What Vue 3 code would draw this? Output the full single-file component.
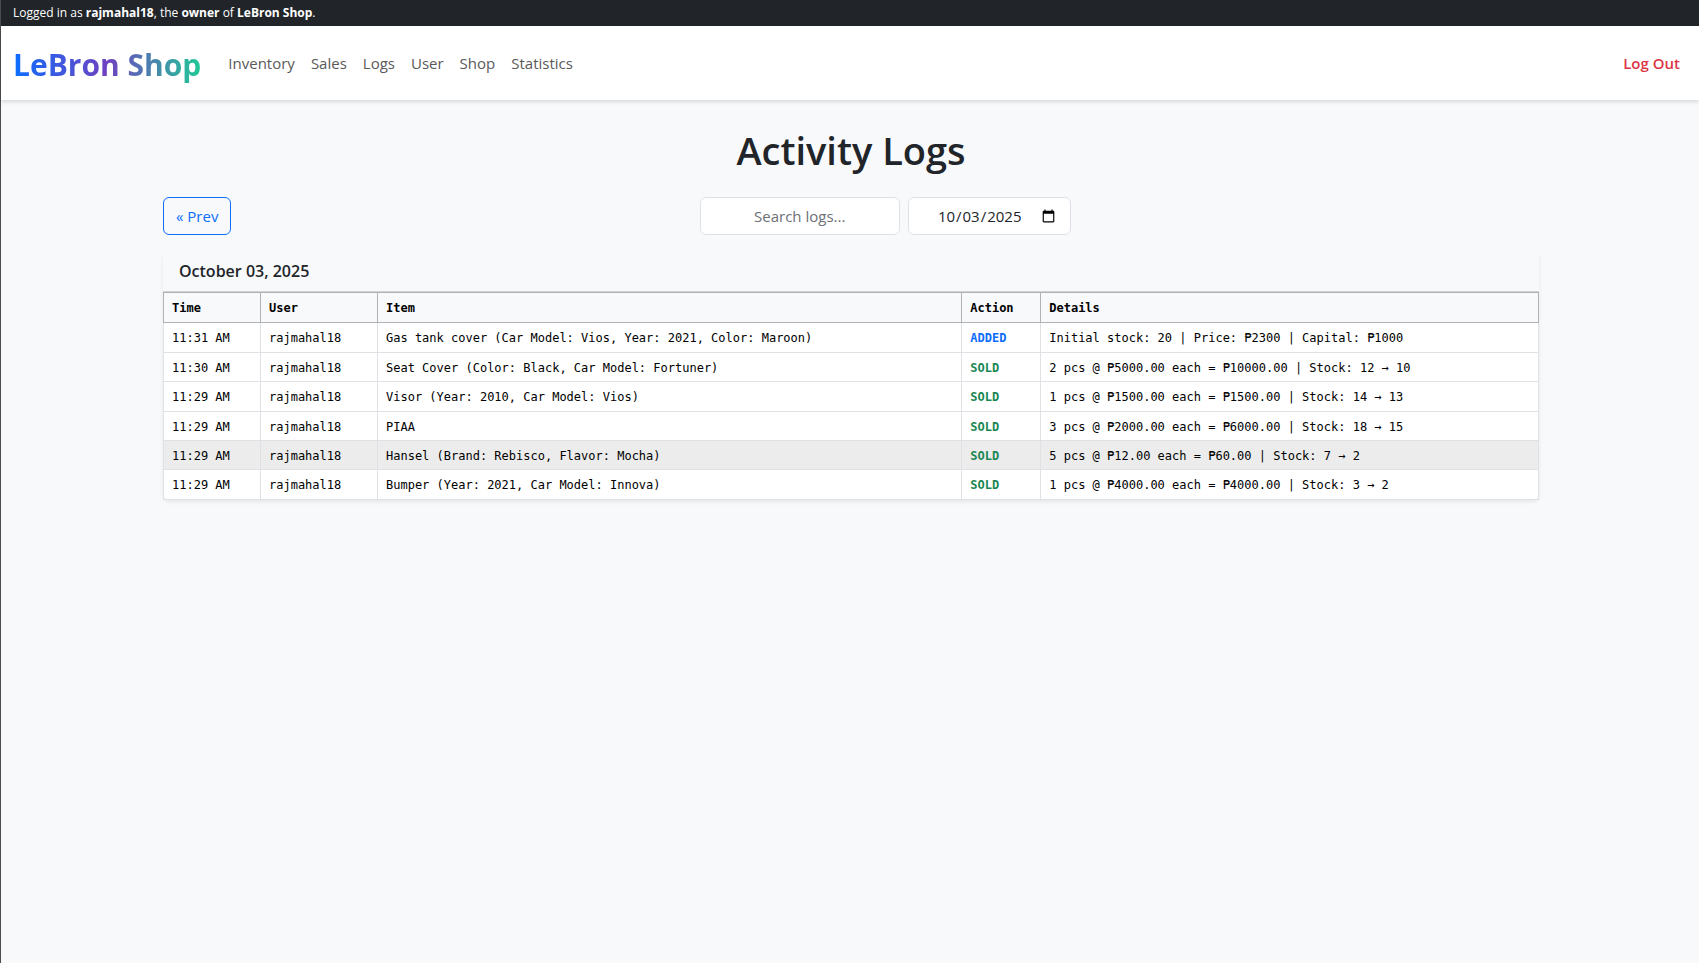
<script setup>
import { ref, computed } from 'vue'

const links = ['Inventory', 'Sales', 'Logs', 'User', 'Shop', 'Statistics']
const search = ref('')
const date = ref('2025-10-03')

const logs = [
  { time: '11:31 AM', user: 'rajmahal18', item: 'Gas tank cover (Car Model: Vios, Year: 2021, Color: Maroon)', action: 'ADDED', details: 'Initial stock: 20 | Price: ₱2300 | Capital: ₱1000' },
  { time: '11:30 AM', user: 'rajmahal18', item: 'Seat Cover (Color: Black, Car Model: Fortuner)', action: 'SOLD', details: '2 pcs @ ₱5000.00 each = ₱10000.00 | Stock: 12 → 10' },
  { time: '11:29 AM', user: 'rajmahal18', item: 'Visor (Year: 2010, Car Model: Vios)', action: 'SOLD', details: '1 pcs @ ₱1500.00 each = ₱1500.00 | Stock: 14 → 13' },
  { time: '11:29 AM', user: 'rajmahal18', item: 'PIAA', action: 'SOLD', details: '3 pcs @ ₱2000.00 each = ₱6000.00 | Stock: 18 → 15' },
  { time: '11:29 AM', user: 'rajmahal18', item: 'Hansel (Brand: Rebisco, Flavor: Mocha)', action: 'SOLD', details: '5 pcs @ ₱12.00 each = ₱60.00 | Stock: 7 → 2', active: true },
  { time: '11:29 AM', user: 'rajmahal18', item: 'Bumper (Year: 2021, Car Model: Innova)', action: 'SOLD', details: '1 pcs @ ₱4000.00 each = ₱4000.00 | Stock: 3 → 2' },
]

const visibleLogs = computed(() => {
  const term = search.value.trim().toLowerCase()
  return logs.filter((log) => `${log.user} ${log.item} ${log.action} ${log.details}`.toLowerCase().includes(term))
})
</script>

<template>
  <div class="page">
    <div class="status">
      Logged in as <strong>rajmahal18</strong>, the <strong>owner</strong> of <strong>LeBron Shop</strong>.
    </div>
    <header class="navbar">
      <a class="brand" href="#">LeBron Shop</a>
      <nav class="links" aria-label="Main">
        <a v-for="link in links" :key="link" href="#">{{ link }}</a>
      </nav>
      <a class="logout" href="#">Log Out</a>
    </header>

    <main class="container">
      <h1>Activity Logs</h1>
      <div class="toolbar">
        <button class="prev" type="button">« Prev</button>
        <form class="filters" @submit.prevent>
          <input v-model="search" class="field search" type="text" placeholder="Search logs..." aria-label="Search logs" />
          <input v-model="date" class="field date" type="date" aria-label="Log date" />
        </form>
        <span></span>
      </div>

      <section class="card">
        <h2>October 03, 2025</h2>
        <table>
          <colgroup>
            <col class="col-time" />
            <col class="col-user" />
            <col />
            <col class="col-action" />
            <col class="col-details" />
          </colgroup>
          <thead>
            <tr>
              <th>Time</th>
              <th>User</th>
              <th>Item</th>
              <th>Action</th>
              <th>Details</th>
            </tr>
          </thead>
          <tbody>
            <tr v-for="(log, i) in visibleLogs" :key="i" :class="{ active: log.active }">
              <td>{{ log.time }}</td>
              <td>{{ log.user }}</td>
              <td>{{ log.item }}</td>
              <td><span class="action" :class="log.action.toLowerCase()">{{ log.action }}</span></td>
              <td>{{ log.details }}</td>
            </tr>
          </tbody>
        </table>
      </section>
    </main>
  </div>
</template>

<style>
body {
  margin: 0;
  background: #f8f9fb;
}
</style>

<style scoped>
* {
  box-sizing: border-box;
}
.page {
  min-height: 100vh;
  border-left: 1px solid #4b4c52;
  background: #f8f9fb;
  color: #212529;
  font: 15px/24px "Open Sans", "Noto Sans", sans-serif;
}
.status {
  padding: 3px 12px;
  background: #212529;
  color: #fff;
  font-size: 12px;
  line-height: 20px;
}
.navbar {
  display: flex;
  align-items: center;
  height: 74px;
  padding: 0 19px 0 12px;
  background: #fff;
  box-shadow: 0 2px 4px rgba(0, 0, 0, 0.13);
}
.brand {
  margin-right: 27px;
  padding-top: 4px;
  background: linear-gradient(90deg, #0d6efd, #6f42c1 50%, #20c997);
  background-clip: text;
  color: transparent;
  font-size: 30px;
  font-weight: 700;
  line-height: 48px;
  text-decoration: none;
}
.links {
  display: flex;
  gap: 16px;
}
.links a {
  color: #595959;
  text-decoration: none;
}
.logout {
  margin-left: auto;
  color: #dc3545;
  font-weight: 600;
  text-decoration: none;
}
.container {
  max-width: 1400px;
  margin: 0 auto;
  padding: 26px 11px 26px 13px;
}
h1 {
  margin: 0 0 23px;
  font-size: 38px;
  font-weight: 600;
  line-height: 48px;
  text-align: center;
}
.toolbar {
  display: flex;
  justify-content: space-between;
  margin-bottom: 16px;
}
.prev,
.field {
  height: 38px;
  border-radius: 6px;
  font: inherit;
}
.prev {
  padding: 0 12px;
  border: 1px solid #0d6efd;
  background: transparent;
  color: #0d6efd;
}
.filters {
  display: flex;
  gap: 8px;
}
.field {
  padding: 6px 12px;
  border: 1px solid #dee2e6;
  background: #fff;
  color: #212529;
  text-align: center;
}
.search {
  width: 200px;
}
.search::placeholder {
  color: #6c7075;
  opacity: 1;
}
.date {
  width: 163px;
}
.card {
  border-radius: 6px;
  background: #fff;
  box-shadow: 0 2px 4px rgba(0, 0, 0, 0.075);
}
h2 {
  margin: 0;
  padding: 8px 16px;
  border-bottom: 1px solid #d0d2d4;
  border-radius: 6px 6px 0 0;
  background: #f8f9fb;
  font-size: 16px;
  font-weight: 600;
  line-height: 24px;
}
table {
  width: 100%;
  table-layout: fixed;
  border-collapse: collapse;
  color: #000;
  font: 12px/1.7 "DejaVu Sans Mono", monospace;
}
.col-time {
  width: 97px;
}
.col-user {
  width: 117px;
}
.col-action {
  width: 79px;
}
.col-details {
  width: 36.2%;
}
th,
td {
  padding: 5px 8px 3px;
  border: 1px solid #dee2e6;
  text-align: left;
}
th {
  padding-bottom: 4px;
  border-color: #b0b2b5;
  background: #f8f9fb;
  font-weight: 700;
}
.active td {
  background: #ececec;
}
.action {
  font-weight: 700;
}
.added {
  color: #0d6efd;
}
.sold {
  color: #198754;
}
</style>
